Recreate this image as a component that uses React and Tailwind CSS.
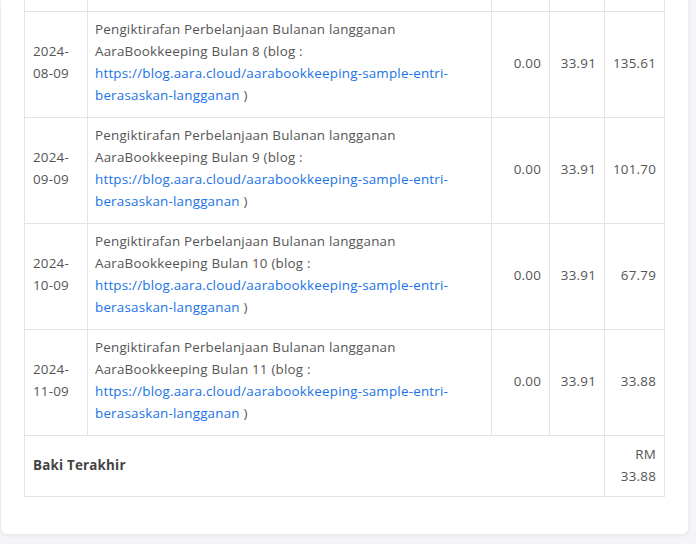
import React from 'react';

const url = 'https://blog.aara.cloud/aarabookkeeping-sample-entri-berasaskan-langganan';

const rows = [
  { date: ['2024-', '08-09'], bulan: 8, debit: '0.00', kredit: '33.91', baki: '135.61' },
  { date: ['2024-', '09-09'], bulan: 9, debit: '0.00', kredit: '33.91', baki: '101.70' },
  { date: ['2024-', '10-09'], bulan: 10, debit: '0.00', kredit: '33.91', baki: '67.79' },
  { date: ['2024-', '11-09'], bulan: 11, debit: '0.00', kredit: '33.91', baki: '33.88' },
];

const cell = 'border border-[#e4e4e4] px-2 align-middle';

const App = () => {
  return (
    <div
      className="h-[544px] w-[696px] overflow-hidden bg-[#f5f5f9] text-[13.4px] leading-[22px] tracking-[0.2px] text-[#555]"
      style={{ fontFamily: '"Open Sans", "Liberation Sans", sans-serif' }}
    >
      {/* Card */}
      <div className="ml-[1px] w-[687px] rounded-b-md bg-white px-[23px] pb-[37px] shadow-[0_1px_4px_rgba(0,0,0,0.08)]">
        <table className="w-[640px] table-fixed border-collapse">
          <colgroup>
            <col className="w-[63px]" />
            <col className="w-[404px]" />
            <col className="w-[58px]" />
            <col className="w-[55px]" />
            <col className="w-[60px]" />
          </colgroup>
          <tbody>
            {/* tail of the previous row */}
            <tr className="h-[11px]">
              <td className={`${cell} border-t-0 p-0`}></td>
              <td className={`${cell} border-t-0 p-0`}></td>
              <td className={`${cell} border-t-0 p-0`}></td>
              <td className={`${cell} border-t-0 p-0`}></td>
              <td className={`${cell} border-t-0 p-0`}></td>
            </tr>

            {rows.map((r) => (
              <tr key={r.bulan} className="h-[106px]">
                <td className={`${cell} pt-0 pb-[4px]`}>
                  {r.date[0]}
                  <br />
                  {r.date[1]}
                </td>
                <td className={`${cell} pt-[6px] pb-[10px] pl-[7px]`}>
                  Pengiktirafan Perbelanjaan Bulanan langganan AaraBookkeeping Bulan {r.bulan} (blog :{' '}
                  <a href={url} className="text-[#1a73e8]">
                    {url}
                  </a>{' '}
                  )
                </td>
                <td className={`${cell} pt-0 pb-[2px] text-right`}>{r.debit}</td>
                <td className={`${cell} pt-0 pb-[2px] text-right`}>{r.kredit}</td>
                <td className={`${cell} pt-0 pb-[2px] text-right`}>{r.baki}</td>
              </tr>
            ))}

            {/* Footer */}
            <tr className="h-[61px]">
              <td colSpan={4} className={`${cell} pt-0 pb-[2px] font-bold text-[#444]`}>
                Baki Terakhir
              </td>
              <td className={`${cell} pt-[6px] pb-[8px] text-right`}>RM 33.88</td>
            </tr>
          </tbody>
        </table>
      </div>
    </div>
  );
};

export default App;
